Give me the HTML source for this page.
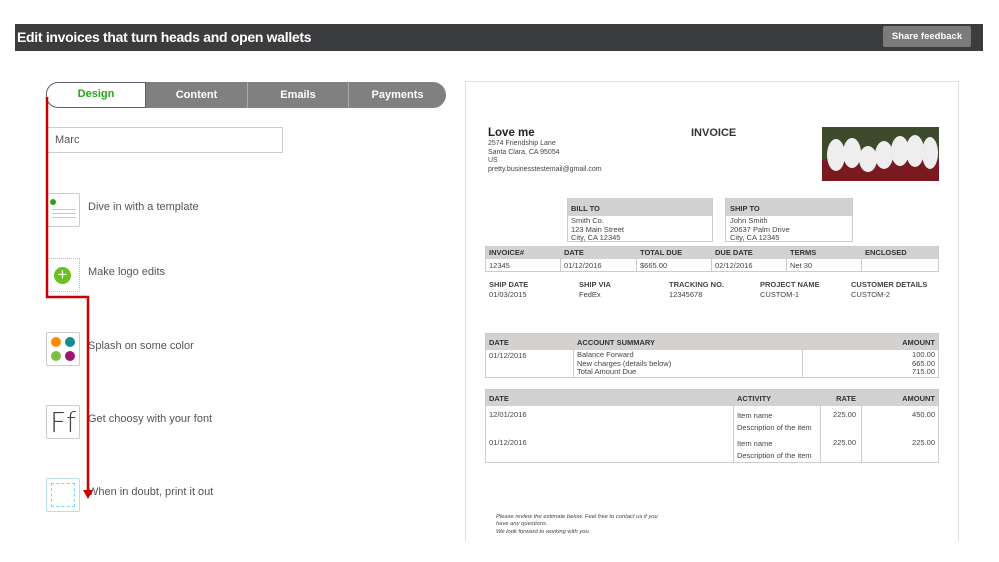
<!DOCTYPE html>
<html><head><meta charset="utf-8">
<style>
*{margin:0;padding:0;box-sizing:border-box}
body{width:999px;height:562px;background:#fff;position:relative;overflow:hidden;font-family:"Liberation Sans",sans-serif}
.a{position:absolute}
.hdr{left:15px;top:24px;width:968px;height:27px;background:#3b3c3e}
.hdr h1{position:absolute;left:2px;top:5px;color:#fff;font-size:14px;font-weight:bold;letter-spacing:-0.3px}
.btn{left:883px;top:26px;width:88px;height:21px;background:#7b7b7b;color:#fff;font-size:9.5px;font-weight:bold;text-align:center;line-height:21px;border-radius:2px}
.tab{top:82px;height:26px;background:#808080;color:#fff;font-size:11px;font-weight:bold;text-align:center;line-height:26px;border-left:1px solid #a8a8a8}
.lbl{left:88px;font-size:11px;color:#555}
.ico{left:46px;width:34px;height:34px;border:1px solid #ccc;border-radius:2px;background:#fff}
.inv{font-size:7.5px;color:#444}
.hd{background:#d3d2d0;font-weight:bold;color:#333;font-size:7.5px}
.t{position:absolute;white-space:nowrap}
</style></head><body>
<div class="a hdr"><h1>Edit invoices that turn heads and open wallets</h1></div>
<div class="a btn">Share feedback</div>

<div class="a tab" style="left:146px;width:101px;border-left:none">Content</div>
<div class="a tab" style="left:247px;width:101px">Emails</div>
<div class="a tab" style="left:348px;width:98px;border-radius:0 13px 13px 0">Payments</div>
<div class="a" style="left:46px;top:82px;width:100px;height:26px;border:1.5px solid #5a6070;border-radius:12px 0 0 12px;background:#fff;color:#2ca01c;font-size:11px;font-weight:bold;text-align:center;line-height:23px">Design</div>

<div class="a" style="left:46px;top:127px;width:237px;height:26px;border:1px solid #ccc;font-size:11px;color:#555;padding:6px 0 0 8px">Marc</div>

<div class="a ico" style="top:193px"><div class="a" style="left:3px;top:5px;width:6px;height:6px;border-radius:50%;background:#2ca01c"></div><div class="a" style="left:5px;top:15px;width:24px;border-top:1px solid #ccc"></div><div class="a" style="left:5px;top:19px;width:24px;border-top:1px solid #ccc"></div><div class="a" style="left:5px;top:23px;width:24px;border-top:1px solid #ccc"></div></div>
<div class="a" style="left:46px;top:258px;width:34px;height:34px;border:1px dotted #bbb"><div class="a" style="left:7px;top:8px;width:17px;height:17px;border-radius:50%;background:#6bc01f;color:#fff;font-size:17px;line-height:16px;text-align:center">+</div></div>
<div class="a ico" style="top:332px"><div class="a" style="left:4px;top:4px;width:10px;height:10px;border-radius:50%;background:#ff8c00"></div><div class="a" style="left:18px;top:4px;width:10px;height:10px;border-radius:50%;background:#108e93"></div><div class="a" style="left:4px;top:18px;width:10px;height:10px;border-radius:50%;background:#7ac043"></div><div class="a" style="left:18px;top:18px;width:10px;height:10px;border-radius:50%;background:#a0136e"></div></div>
<div class="a ico" style="top:405px;font-size:28px;color:#444;font-family:'DejaVu Sans',sans-serif;font-weight:200;line-height:33px;text-align:center">Ff</div>
<div class="a ico" style="top:478px;border-color:#bde"><div class="a" style="left:4px;top:4px;width:24px;height:24px;border:1px dashed #7fd3f5"></div></div>

<div class="a lbl" style="top:201px">Dive in with a template</div>
<div class="a lbl" style="top:266px">Make logo edits</div>
<div class="a lbl" style="top:340px">Splash on some color</div>
<div class="a lbl" style="top:413px">Get choosy with your font</div>
<div class="a lbl" style="top:486px">When in doubt, print it out</div>

<svg class="a" style="left:0;top:0" width="999" height="562"><polyline points="47,97 47,297 88,297 88,492" fill="none" stroke="#c00" stroke-width="2.5"/><polygon points="83,490 93,490 88,499" fill="#c00"/></svg>

<div class="a" style="left:465px;top:81px;width:494px;height:460px;border:1px solid #ddd;border-bottom:none"></div>
<div class="t" style="left:488px;top:127px;font-size:11.5px;font-weight:bold;color:#222">Love me</div>
<div class="t inv" style="left:488px;top:140px;line-height:8.6px;font-size:7px">2574 Friendship Lane<br>Santa Clara, CA 95054<br>US<br>pretty.businesstestemail@gmail.com</div>
<div class="t" style="left:691px;top:127px;font-size:11px;font-weight:bold;color:#333">INVOICE</div>
<svg class="a" style="left:822px;top:127px" width="117" height="54"><rect width="117" height="54" fill="#3d4a2c"/><rect y="32" width="117" height="22" fill="#7a1a20"/><g fill="#eee"><ellipse cx="14" cy="28" rx="9" ry="16"/><ellipse cx="30" cy="26" rx="9" ry="15"/><ellipse cx="46" cy="32" rx="9" ry="13"/><ellipse cx="62" cy="28" rx="9" ry="14"/><ellipse cx="78" cy="24" rx="9" ry="15"/><ellipse cx="93" cy="24" rx="9" ry="16"/><ellipse cx="108" cy="26" rx="8" ry="16"/></g></svg>

<div class="a" style="left:567px;top:198px;width:146px;height:44px;border:1px solid #ccc"><div class="hd" style="height:17px;padding:5px 3px">BILL TO</div><div class="inv" style="padding:1px 3px;line-height:8.5px">Smith Co.<br>123 Main Street<br>City, CA 12345</div></div>
<div class="a" style="left:725px;top:198px;width:128px;height:44px;border:1px solid #ccc"><div class="hd" style="height:17px;padding:5px 4px">SHIP TO</div><div class="inv" style="padding:1px 4px;line-height:8.5px">John Smith<br>20637 Palm Drive<br>City, CA 12345</div></div>

<div class="a" style="left:485px;top:246px;width:454px;height:26px;border:1px solid #ccc"><div class="hd" style="height:12px"></div></div>
<div class="a" style="left:560px;top:258px;height:14px;border-left:1px solid #ccc"></div>
<div class="a" style="left:636px;top:258px;height:14px;border-left:1px solid #ccc"></div>
<div class="a" style="left:711px;top:258px;height:14px;border-left:1px solid #ccc"></div>
<div class="a" style="left:786px;top:258px;height:14px;border-left:1px solid #ccc"></div>
<div class="a" style="left:861px;top:258px;height:14px;border-left:1px solid #ccc"></div>
<div class="t" style="left:489px;top:248px;font-size:7.5px;font-weight:bold;color:#333">INVOICE#</div>
<div class="t" style="left:564px;top:248px;font-size:7.5px;font-weight:bold;color:#333">DATE</div>
<div class="t" style="left:640px;top:248px;font-size:7.5px;font-weight:bold;color:#333">TOTAL DUE</div>
<div class="t" style="left:715px;top:248px;font-size:7.5px;font-weight:bold;color:#333">DUE DATE</div>
<div class="t" style="left:790px;top:248px;font-size:7.5px;font-weight:bold;color:#333">TERMS</div>
<div class="t" style="left:865px;top:248px;font-size:7.5px;font-weight:bold;color:#333">ENCLOSED</div>
<div class="t inv" style="left:489px;top:261px">12345</div>
<div class="t inv" style="left:564px;top:261px">01/12/2016</div>
<div class="t inv" style="left:640px;top:261px">$665.00</div>
<div class="t inv" style="left:715px;top:261px">02/12/2016</div>
<div class="t inv" style="left:790px;top:261px">Net 30</div>

<div class="t" style="left:489px;top:280px;font-size:7.5px;font-weight:bold;color:#444">SHIP DATE</div>
<div class="t" style="left:579px;top:280px;font-size:7.5px;font-weight:bold;color:#444">SHIP VIA</div>
<div class="t" style="left:669px;top:280px;font-size:7.5px;font-weight:bold;color:#444">TRACKING NO.</div>
<div class="t" style="left:760px;top:280px;font-size:7.5px;font-weight:bold;color:#444">PROJECT NAME</div>
<div class="t" style="left:851px;top:280px;font-size:7.5px;font-weight:bold;color:#444">CUSTOMER DETAILS</div>
<div class="t inv" style="left:489px;top:290px">01/03/2015</div>
<div class="t inv" style="left:579px;top:290px">FedEx</div>
<div class="t inv" style="left:669px;top:290px">12345678</div>
<div class="t inv" style="left:760px;top:290px">CUSTOM-1</div>
<div class="t inv" style="left:851px;top:290px">CUSTOM-2</div>

<div class="a" style="left:485px;top:333px;width:454px;height:45px;border:1px solid #ccc"><div class="hd" style="height:16px"></div></div>
<div class="a" style="left:573px;top:349px;height:29px;border-left:1px solid #ccc"></div>
<div class="a" style="left:802px;top:349px;height:29px;border-left:1px solid #ccc"></div>
<div class="t" style="left:489px;top:338px;font-size:7.5px;font-weight:bold;color:#333">DATE</div>
<div class="t" style="left:577px;top:338px;font-size:7.5px;font-weight:bold;color:#333">ACCOUNT SUMMARY</div>
<div class="t" style="right:64px;top:338px;font-size:7.5px;font-weight:bold;color:#333">AMOUNT</div>
<div class="t inv" style="left:489px;top:351px">01/12/2016</div>
<div class="t inv" style="left:577px;top:351px;line-height:8.5px">Balance Forward<br>New charges (details below)<br>Total Amount Due</div>
<div class="t inv" style="right:64px;top:351px;line-height:8.5px;text-align:right">100.00<br>665.00<br>715.00</div>

<div class="a" style="left:485px;top:389px;width:454px;height:74px;border:1px solid #ccc"><div class="hd" style="height:16px"></div></div>
<div class="a" style="left:733px;top:405px;height:58px;border-left:1px solid #ccc"></div>
<div class="a" style="left:820px;top:405px;height:58px;border-left:1px solid #ccc"></div>
<div class="a" style="left:861px;top:405px;height:58px;border-left:1px solid #ccc"></div>
<div class="t" style="left:489px;top:394px;font-size:7.5px;font-weight:bold;color:#333">DATE</div>
<div class="t" style="left:737px;top:394px;font-size:7.5px;font-weight:bold;color:#333">ACTIVITY</div>
<div class="t" style="right:143px;top:394px;font-size:7.5px;font-weight:bold;color:#333">RATE</div>
<div class="t" style="right:64px;top:394px;font-size:7.5px;font-weight:bold;color:#333">AMOUNT</div>
<div class="t inv" style="left:489px;top:410px">12/01/2016</div>
<div class="t inv" style="left:737px;top:410px;line-height:12px">Item name<br>Description of the item</div>
<div class="t inv" style="right:143px;top:410px">225.00</div>
<div class="t inv" style="right:64px;top:410px">450.00</div>
<div class="t inv" style="left:489px;top:438px">01/12/2016</div>
<div class="t inv" style="left:737px;top:438px;line-height:12px">Item name<br>Description of the item</div>
<div class="t inv" style="right:143px;top:438px">225.00</div>
<div class="t inv" style="right:64px;top:438px">225.00</div>

<div class="t" style="left:496px;top:514px;font-size:5.8px;font-style:italic;color:#444;line-height:7.3px">Please review the estimate below. Feel free to contact us if you<br>have any questions.<br>We look forward to working with you.</div>
</body></html>
